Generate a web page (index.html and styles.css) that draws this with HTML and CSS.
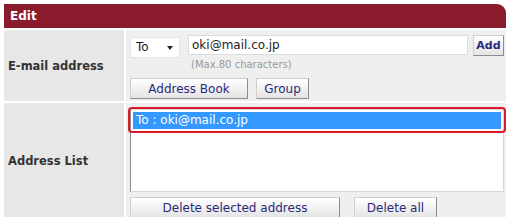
FILE: index.html
```html
<!DOCTYPE html>
<html lang="en">
<head>
    <meta charset="UTF-8">
    <title>Edit</title>
    <link rel="stylesheet" href="styles.css">
</head>
<body>
    <div class="panel">
        <div class="head">Edit</div>

        <div class="row row-mail">
            <div class="label">E-mail address</div>
            <div class="cell">
                <div class="line">
                    <div class="select">To <span class="arrow"></span></div>
                    <div class="field">
                        <div class="input">oki@mail.co.jp</div>
                        <div class="hint">(Max.80 characters)</div>
                    </div>
                    <button class="btn btn-add">Add</button>
                </div>
                <div class="line">
                    <button class="btn btn-book">Address Book</button>
                    <button class="btn btn-group">Group</button>
                </div>
            </div>
        </div>

        <!-- address list -->
        <div class="row row-list">
            <div class="label">Address List</div>
            <div class="cell">
                <div class="listbox">
                    <div class="item selected">To : oki@mail.co.jp</div>
                    <div class="mark"></div>
                </div>
                <div class="line">
                    <button class="btn btn-del">Delete selected address</button>
                    <button class="btn btn-all">Delete all</button>
                </div>
            </div>
        </div>
    </div>
</body>
</html>
```

FILE: styles.css
```css
* {
    margin: 0;
    padding: 0;
    box-sizing: border-box;
}

body {
    background: white;
    font-family: "DejaVu Sans", Verdana, sans-serif;
    font-size: 12px;
    color: #222;
}

.panel {
    width: 502px;
    margin: 4px 0 0 4px;
}

.head {
    height: 24px;
    background: #8a1b2c;
    color: white;
    font-weight: bold;
    font-size: 12px;
    line-height: 24px;
    padding-left: 6px;
    border-top-right-radius: 9px;
}

.row {
    display: grid;
    grid-template-columns: 120px 1fr;
    gap: 2px;
    margin-top: 2px;
}

.row-mail {
    height: 71px;
}

.row-list {
    height: 114px;
}

.label {
    background: #e7e7e7;
    font-weight: bold;
    font-size: 11.5px;
    display: flex;
    align-items: center;
    padding-left: 4px;
    color: #333;
}

.cell {
    background: #efefef;
    padding: 5px 2px 0 4px;
    display: flex;
    flex-direction: column;
}

.line {
    display: flex;
    align-items: flex-start;
    gap: 8px;
}

.select {
    width: 50px;
    height: 21px;
    margin-top: 2px;
    background: white;
    border: 1px solid #e4e4e4;
    font-size: 12px;
    line-height: 19px;
    padding-left: 5px;
    position: relative;
}

.arrow {
    position: absolute;
    right: 6px;
    top: 8px;
    border-left: 3px solid transparent;
    border-right: 3px solid transparent;
    border-top: 4px solid #222;
}

.field {
    width: 280px;
}

.input {
    height: 20px;
    background: white;
    border: 1px solid #dcdcdc;
    line-height: 18px;
    padding-left: 3px;
    font-size: 12px;
}

.hint {
    font-size: 10px;
    color: #999;
    padding: 4px 0 0 3px;
}

.btn {
    height: 21px;
    font-family: "DejaVu Sans", Verdana, sans-serif;
    font-size: 12px;
    color: #2a2a7a;
    background: linear-gradient(#ffffff, #e4e4e4);
    border: 1px solid #cfcfcf;
    border-right-color: #8c8c8c;
    border-bottom-color: #8c8c8c;
}

.btn-add {
    width: 31px;
    margin-left: -3px;
    font-weight: bold;
    font-size: 11px;
}

.row-mail .line + .line {
    margin-top: 8px;
}

.btn-book {
    width: 118px;
}

.btn-group {
    width: 53px;
}

.listbox {
    height: 83px;
    background: white;
    border: 1px solid #d8d8d8;
    border-left-color: #8c8c8c;
    padding: 2px;
    margin-top: 1px;
    position: relative;
}

.item {
    height: 17px;
    line-height: 17px;
    padding-left: 3px;
    font-size: 12px;
}

.item.selected {
    background: #3399ff;
    color: white;
}

/* red highlight around the selected entry */
.mark {
    position: absolute;
    left: -3px;
    right: -3px;
    top: -3px;
    height: 26px;
    border: 2px solid #d9182b;
    border-radius: 4px;
}

.row-list .line {
    margin-top: 5px;
    gap: 14px;
}

.btn-del {
    width: 210px;
}

.btn-all {
    width: 83px;
}
```
